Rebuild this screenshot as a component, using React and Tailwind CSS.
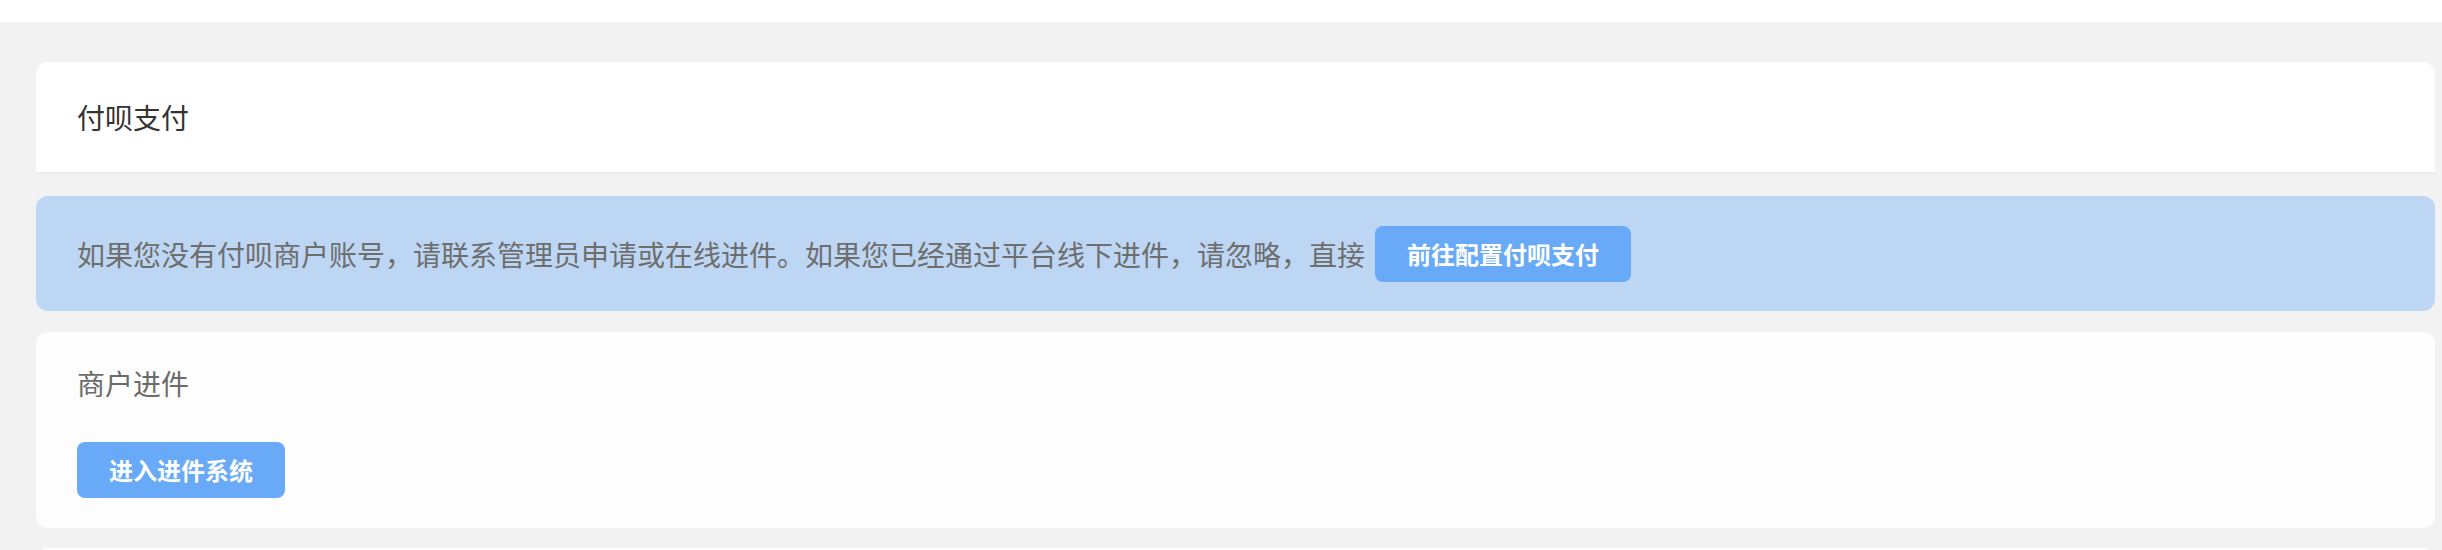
export default function App() {
  const font = { fontFamily: '"Noto Sans CJK SC", "Noto Sans", sans-serif' }

  return (
    <div className="min-h-[550px] bg-[#f2f2f2]" style={font}>
      {/* top bar */}
      <div className="h-[22px] bg-white" />

      <div className="pl-[36px] pr-[7px] pt-[40px]">
        {/* page title */}
        <div className="flex h-[112px] items-center rounded-t-[12px] border-b-2 border-[#e9edf2] bg-white pl-[41px]">
          <span className="text-[28px] leading-[42px] text-[#333333]">付呗支付</span>
        </div>

        {/* notice */}
        <div className="mt-[22px] flex h-[115px] items-center rounded-[12px] bg-[#bdd6f3] pl-[41px]">
          <span className="text-[28px] leading-[42px] text-[#6e6e6e]">
            如果您没有付呗商户账号，请联系管理员申请或在线进件。如果您已经通过平台线下进件，请忽略，直接
          </span>
          <button className="ml-[10px] flex h-[56px] items-center rounded-[8px] bg-[#68aaf7] px-[32px] text-[24px] font-bold text-white">
            前往配置付呗支付
          </button>
        </div>

        {/* merchant onboarding */}
        <div className="mt-[21px] flex flex-col items-start rounded-[12px] bg-[#fdfdfd] py-[30px] pl-[41px]">
          <div className="mb-[38px] text-[28px] leading-[42px] text-[#6b6b6b]">商户进件</div>
          <button className="flex h-[56px] items-center rounded-[8px] bg-[#68aaf7] px-[32px] text-[24px] font-bold text-white">
            进入进件系统
          </button>
        </div>

        <div className="mt-[20px] h-[120px] rounded-t-[12px] bg-white" />
      </div>
    </div>
  )
}
